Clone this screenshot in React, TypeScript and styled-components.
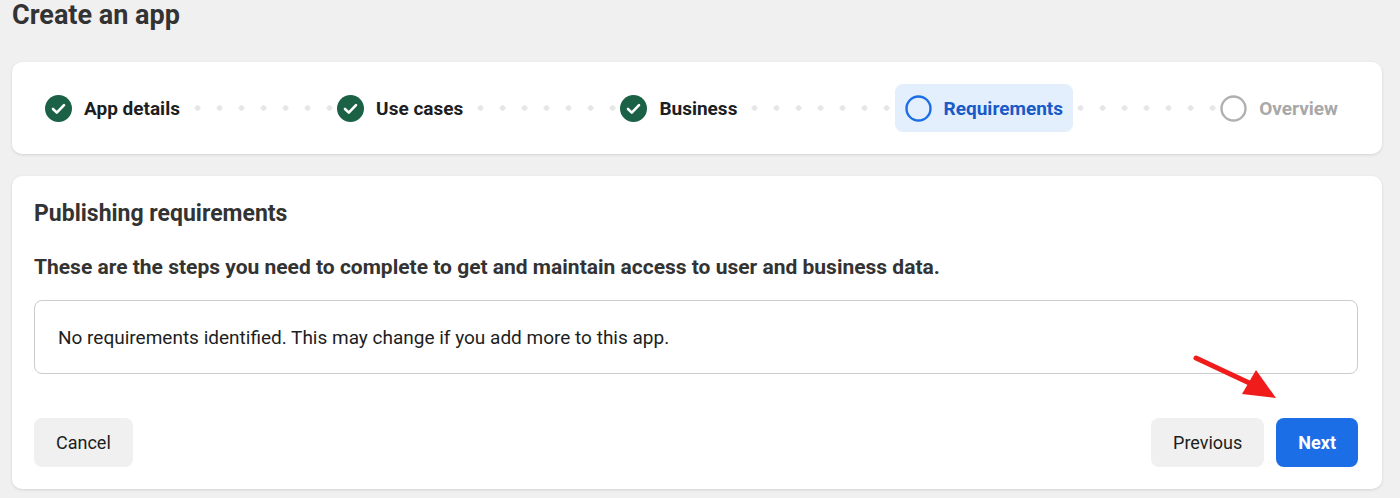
import React from 'react';
import styled, { createGlobalStyle } from 'styled-components';

const Global = createGlobalStyle`
  body {
    margin: 0;
    background: #f0f0f0;
    font-family: Roboto, "Liberation Sans", sans-serif;
    color: #1c1e21;
  }
`;

const Page = styled.div`
  padding: 0 18px 10px 12px;
  position: relative;
`;

const Title = styled.h1`
  margin: 0;
  height: 32px;
  line-height: 30px;
  font-size: 27px;
  font-weight: 700;
  color: #333;
`;

const Card = styled.div`
  background: #fff;
  border-radius: 10px;
  box-shadow: 0 1px 3px rgba(0, 0, 0, 0.12);
`;

const StepperCard = styled(Card)`
  margin-top: 30px;
  height: 92px;
  display: flex;
  align-items: center;
  padding: 0 34px 0 33px;
`;

const Step = styled.div<{ $active?: boolean }>`
  display: flex;
  align-items: center;
  gap: 12px;
  height: 48px;
  padding: 0 10px 0 ${p => (p.$active ? '10px' : '0')};
  border-radius: 8px;
  background: ${p => (p.$active ? '#e3effd' : 'transparent')};
`;

const StepLabel = styled.span<{ $state: 'done' | 'active' | 'todo' }>`
  font-size: 19px;
  font-weight: 700;
  color: ${p => (p.$state === 'active' ? '#1a5ac8' : p.$state === 'todo' ? '#a8a8a8' : '#1c1e21')};
`;

const Dots = styled.div`
  flex: 1;
  height: 6px;
  margin: 0 4px;
  background-image: radial-gradient(circle, #e6e6e6 2.5px, transparent 3px);
  background-size: 22px 6px;
  background-position: center;
`;

const MainCard = styled(Card)`
  margin-top: 22px;
  padding: 24px 24px 22px 22px;
`;

const Heading = styled.h2`
  margin: 0;
  font-size: 23px;
  font-weight: 700;
  color: #333;
`;

const Sub = styled.p`
  margin: 28px 0 0;
  font-size: 21px;
  font-weight: 700;
  color: #333;
`;

const Notice = styled.div`
  margin-top: 21px;
  border: 1px solid #ccc;
  border-radius: 8px;
  height: 72px;
  display: flex;
  align-items: center;
  padding: 0 23px;
  font-size: 19px;
  color: #1c1e21;
`;

const Actions = styled.div`
  margin-top: 44px;
  display: flex;
  gap: 12px;
`;

const Button = styled.button<{ $primary?: boolean }>`
  height: 49px;
  padding: 0 22px;
  border: none;
  border-radius: 8px;
  font-family: inherit;
  font-size: 18px;
  font-weight: ${p => (p.$primary ? 700 : 400)};
  background: ${p => (p.$primary ? '#1b6ee6' : '#f0f0f0')};
  color: ${p => (p.$primary ? '#fff' : '#1c1e21')};
  cursor: pointer;
`;

const Spacer = styled.div`
  flex: 1;
`;

const Arrow = styled.svg`
  position: absolute;
  left: 1190px;
  top: 352px;
`;

const Check = () => (
  <svg width="27" height="27" viewBox="0 0 27 27">
    <circle cx="13.5" cy="13.5" r="13.5" fill="#1b6146" />
    <path d="M8 14l3.8 3.6L19 10.2" fill="none" stroke="#fff" strokeWidth="2.6" strokeLinecap="round" strokeLinejoin="round" />
  </svg>
);

const Ring = ({ color }: { color: string }) => (
  <svg width="27" height="27" viewBox="0 0 27 27">
    <circle cx="13.5" cy="13.5" r="12" fill="none" stroke={color} strokeWidth="2.4" />
  </svg>
);

export default function App() {
  return (
    <Page>
      <Global />
      <Title>Create an app</Title>
      <StepperCard>
        <Step><Check /><StepLabel $state="done">App details</StepLabel></Step>
        <Dots />
        <Step><Check /><StepLabel $state="done">Use cases</StepLabel></Step>
        <Dots />
        <Step><Check /><StepLabel $state="done">Business</StepLabel></Step>
        <Dots />
        <Step $active><Ring color="#1b6ee6" /><StepLabel $state="active">Requirements</StepLabel></Step>
        <Dots />
        <Step><Ring color="#b0b0b0" /><StepLabel $state="todo">Overview</StepLabel></Step>
      </StepperCard>
      <MainCard>
        <Heading>Publishing requirements</Heading>
        <Sub>These are the steps you need to complete to get and maintain access to user and business data.</Sub>
        <Notice>No requirements identified. This may change if you add more to this app.</Notice>
        <Actions>
          <Button>Cancel</Button>
          <Spacer />
          <Button>Previous</Button>
          <Button $primary>Next</Button>
        </Actions>
      </MainCard>
      <Arrow width="92" height="52" viewBox="0 0 92 52">
        <line x1="6" y1="6" x2="70" y2="36" stroke="#f01c1c" strokeWidth="5" strokeLinecap="round" />
        <polygon points="86,46 52,42 66,18" fill="#f01c1c" />
      </Arrow>
    </Page>
  );
}
